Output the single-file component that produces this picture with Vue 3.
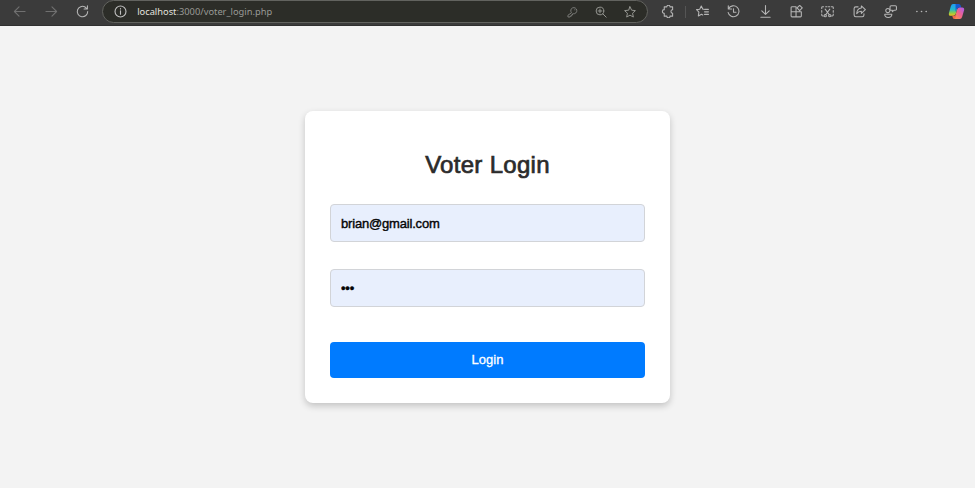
<script setup>
import { ref } from 'vue'

const email = ref('brian@gmail.com')
const password = ref('•••')

const navIcons = [
  { name: 'back', paths: ['M13 7H1.5M6.5 2 1.5 7l5 5'] },
  { name: 'forward', paths: ['M1 7h11.5M7.5 2l5 5-5 5'] },
  { name: 'reload', paths: ['M12.6 7A5.6 5.6 0 1 1 9.8 2.2L12 4.2M12.3 .8v3.6H8.7'] }
]

const addressIcons = [
  { name: 'key', paths: ['M5.4 7.6A3.9 3.9 0 1 1 8 9.2L7 9.4V10.800H5.500V12.300H4V13.400H1.200V11.600ZM9.900 4.200h.2'] },
  { name: 'zoom', paths: ['M10.3 5.8a4.5 4.5 0 1 1-9 0a4.5 4.5 0 1 1 9 0M9.2 9.2 13 13M5.8 3.6v4.4M3.6 5.8H8'] },
  { name: 'star', paths: ['M7 .9 8.9 4.900 13.300 5.400 10 8.400 10.900 12.900 7 10.700 3.100 12.900 4 8.400 .7 5.400 5.100 4.900Z'] }
]

const puzzle = 'M3.500 2H6.300a1.700 1.700 0 0 1 3.400 0H12.500V5.200a1.800 1.800 0 0 0 0 3.600V12H9.700a1.700 1.700 0 0 1-3.400 0H3.500V9a2 2 0 0 1 0-4Z'

const toolIcons = [
  { name: 'favorites', paths: ['M8.400 4.500H7.400L5.700 1.100 4 4.500.600 5l2.500 2.600-.6 4.200 3.400-1.900 1.400.9M9.200 4.700h4.200M9.200 7.400h4.200M9.200 10.100h4.200'] },
  { name: 'history', paths: ['M1.700 4.100A5.900 5.900 0 1 1 1.200 8M1.400 .8v3.600h3.600M7 4v3.800h2.700'] },
  { name: 'download', paths: ['M7 .6v9.400M3 6.200l4 4 4-4M2 13.200h10'] },
  { name: 'apps', paths: ['M6.500 1.800H2.200a1 1 0 0 0-1 1v9a1 1 0 0 0 1 1h9a1 1 0 0 0 1-1V7.300M1.200 7.300h11M6.500 1.800v11M10.400.400l2.800 2.800-2.800 2.800L7.600 3.200Z'] },
  { name: 'screenshot', paths: ['M.8 3.800V2.800a1 1 0 0 1 1-1h1M5 1.800h1.500M8 1.800h1.500M11.200 1.800h1a1 1 0 0 1 1 1v1M.8 6v1.800M13.200 6v1.800M.8 9.800v1a1 1 0 0 0 1 1h.7M13.200 9.800v1a1 1 0 0 1-1 1h-.7M4.500 4.500l4.500 6M9.500 4.500l-4.500 6', 'M5.800 11.500a1.200 1.200 0 1 1-2.400 0a1.200 1.200 0 1 1 2.400 0M10.600 11.500a1.200 1.200 0 1 1-2.400 0a1.200 1.200 0 1 1 2.400 0'] },
  { name: 'share', paths: ['M5.500 2H3A1.800 1.800 0 0 0 1.200 3.800v7A1.800 1.800 0 0 0 3 12.600h7a1.800 1.800 0 0 0 1.800-1.800V9.500M9 1l4.300 4L9 9V6.800C6.800 6.700 5.200 7.500 4 9.300 4.200 5.900 6 3.600 9 3.200Z'] },
  { name: 'feedback', paths: ['M6.300 6a2.200 2.200 0 1 1-4.400 0a2.200 2.200 0 1 1 4.400 0M.8 9.900h7.600c.3 2.200-1.400 3.500-3.800 3.500S.6 12.100.800 9.900M7.700.800h4.500a1.200 1.200 0 0 1 1.200 1.200v2.500a1.200 1.200 0 0 1-1.200 1.200h-1.500L9 7.200V5.700H7.700a1.200 1.200 0 0 1-1.200-1.200V2A1.200 1.200 0 0 1 7.700.800Z'] },
  { name: 'more', paths: ['M2 7h.1M7 7h.1M12 7h.1'] }
]
</script>

<template>
  <div class="page">
    <header class="toolbar">
      <span v-for="icon in navIcons" :key="icon.name" class="slot" :class="icon.name">
        <svg class="icon" viewBox="0 0 14 14"><path v-for="d in icon.paths" :key="d" :d="d" /></svg>
      </span>
      <div class="address">
        <svg class="icon info" viewBox="0 0 14 14">
          <circle cx="7" cy="7" r="5.900" />
          <path d="M7 6.300v3.700M7 3.900v.3" />
        </svg>
        <span class="url"><b>localhost</b>:3000/voter_login.php</span>
        <span v-for="icon in addressIcons" :key="icon.name" class="address-slot">
          <svg class="icon" :class="icon.name" viewBox="0 0 14 14"><path v-for="d in icon.paths" :key="d" :d="d" /></svg>
        </span>
      </div>
      <span class="slot extension"><svg class="icon" viewBox="0 0 14 14"><path :d="puzzle" /></svg></span>
      <i class="divider"></i>
      <span v-for="icon in toolIcons" :key="icon.name" class="slot" :class="icon.name">
        <svg class="icon" viewBox="0 0 14 14"><path v-for="d in icon.paths" :key="d" :d="d" /></svg>
      </span>
      <svg class="copilot" viewBox="0 0 18 18">
        <defs>
          <linearGradient id="cool" x1="0" y1="0" x2="0" y2="1">
            <stop offset="0" stop-color="#229bf0" />
            <stop offset=".45" stop-color="#20b9d0" />
            <stop offset=".75" stop-color="#8acb4a" />
            <stop offset="1" stop-color="#f3c21d" />
          </linearGradient>
          <linearGradient id="warm" x1="1" y1="0" x2="0" y2="1">
            <stop offset="0" stop-color="#a55cf0" />
            <stop offset=".5" stop-color="#f0628f" />
            <stop offset="1" stop-color="#fb9a42" />
          </linearGradient>
        </defs>
        <path fill="url(#cool)" d="M5.300 1h6L8.200 11.500Q7.500 13.500 5.500 13.500H3Q.3 13.500 1 10.500L3 3.500Q3.700 1 5.300 1Z" />
        <path fill="#1759cf" d="M8 1h3.500Q13 1 13.500 3l.6 2H11Q9.500 5 9 6.500L8 9.500Z" />
        <path fill="url(#warm)" d="M12.500 4.700H15Q17.700 4.700 17 7.700L15 14.500Q14.300 17 12.500 17H6.700L9.800 6.700Q10.500 4.700 12.500 4.700Z" />
        <path fill="#f26a4b" d="M4.500 13.500h3.300l1.400-2.500-1.700 6H7Q5.500 17 5 15.300Z" />
      </svg>
    </header>

    <main class="content">
      <form class="card" @submit.prevent>
        <h2>Voter Login</h2>
        <input v-model="email" class="field" type="text" aria-label="Email" />
        <input v-model="password" class="field secret" type="text" aria-label="Password" />
        <button type="submit">Login</button>
      </form>
    </main>
  </div>
</template>

<style>
body {
  margin: 0;
  background: #f3f3f3;
}
</style>

<style scoped>
.page {
  display: flex;
  flex-direction: column;
  height: 488px;
  overflow: hidden;
  font-family: "Liberation Sans", Arial, sans-serif;
}
.toolbar {
  display: flex;
  flex: none;
  box-sizing: border-box;
  height: 26px;
  padding: 0 9px 2px 4px;
  align-items: center;
  background: #3b3b3b;
  border-bottom: 1px solid #303030;
}
.slot {
  display: flex;
  flex: none;
  width: 31.400px;
  justify-content: center;
}
.icon {
  display: block;
  width: 13px;
  height: 13px;
  fill: none;
  stroke: #b5b5b5;
  stroke-width: 1.150;
  stroke-linecap: round;
  stroke-linejoin: round;
}
.back .icon,
.forward .icon {
  stroke: #707070;
}
.more .icon {
  stroke-width: 1.700;
}
.address {
  display: flex;
  flex: none;
  box-sizing: border-box;
  width: 546px;
  height: 23px;
  margin-left: 4px;
  padding: 0 3px 0 11px;
  align-items: center;
  background: #2c2d28;
  border: 1px solid #62635f;
  border-radius: 12px;
}
.address .info {
  stroke: #c0c0c0;
  stroke-width: 1.200;
}
.url {
  flex: 1;
  margin-left: 10px;
  color: #999a96;
  font-family: "Noto Sans", sans-serif;
  font-size: 9.300px;
  line-height: 14px;
  white-space: nowrap;
}
.url b {
  color: #e2e2df;
  font-weight: 400;
}
.address-slot {
  display: flex;
  width: 28.500px;
  justify-content: center;
}
.address-slot .icon {
  width: 12px;
  height: 12px;
  stroke: #969792;
}
.address-slot .key {
  width: 11px;
  stroke: #81827e;
}
.extension {
  margin-left: 4px;
}
.divider {
  flex: none;
  width: 1px;
  height: 12px;
  margin: 0 1px;
  background: #555;
}
.copilot {
  flex: none;
  width: 17px;
  height: 17px;
  margin-left: 10px;
}
.content {
  display: flex;
  flex: 1;
  justify-content: center;
  align-items: flex-start;
  padding-top: 85px;
}
.card {
  display: flex;
  flex-direction: column;
  box-sizing: border-box;
  width: 365px;
  height: 292px;
  padding: 40px 25px 25px;
  background: #fff;
  border-radius: 8px;
  box-shadow: 0 3px 7px rgba(0, 0, 0, .2);
}
h2 {
  margin: 0 0 25px;
  color: #2b2b2b;
  font-size: 24px;
  font-weight: 400;
  letter-spacing: .3px;
  line-height: 28px;
  text-align: center;
  -webkit-text-stroke: .7px #2b2b2b;
}
.field {
  box-sizing: border-box;
  width: 100%;
  height: 38px;
  margin: 0 0 27px;
  padding: 0 10px;
  color: #050505;
  background: #e8effd;
  border: 1px solid #d2d4d8;
  border-radius: 4px;
  outline: 0;
  font: 13px "Liberation Sans", Arial, sans-serif;
  letter-spacing: -.18px;
  -webkit-text-stroke: .4px #050505;
}
.secret {
  margin-bottom: 35px;
}
button {
  height: 36px;
  padding: 0 0 1px;
  color: #fff;
  background: #007bff;
  border: 0;
  border-radius: 4px;
  font: 13px "Liberation Sans", Arial, sans-serif;
  -webkit-text-stroke: .3px #fff;
}
</style>
